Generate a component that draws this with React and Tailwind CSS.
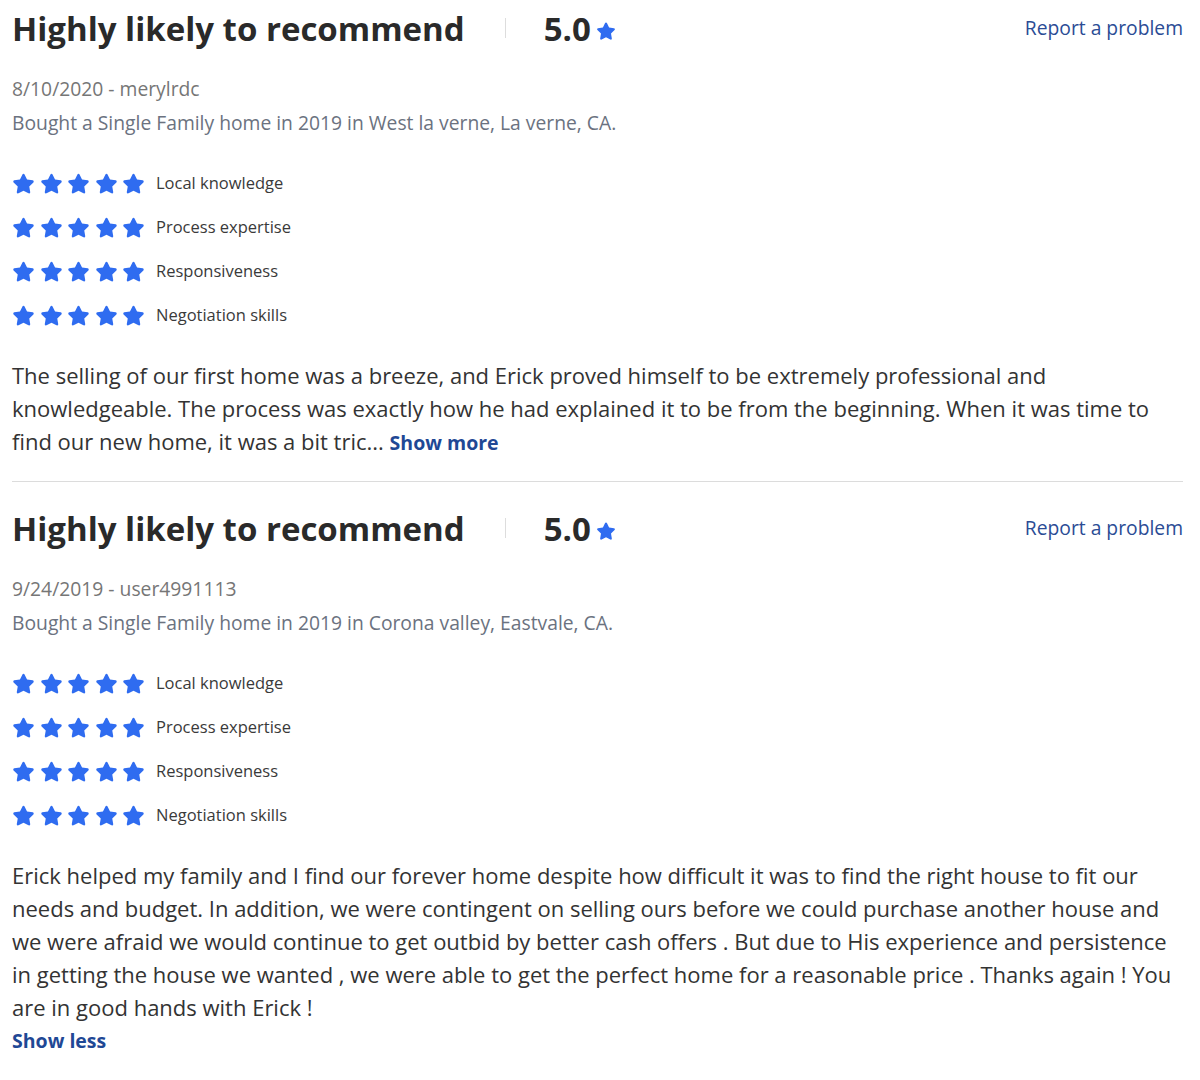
import React from "react";

const reviews = [
    {
        date: "8/10/2020",
        user: "merylrdc",
        bought: "Bought a Single Family home in 2019 in West la verne, La verne, CA.",
        text: "The selling of our first home was a breeze, and Erick proved himself to be extremely professional and knowledgeable. The process was exactly how he had explained it to be from the beginning. When it was time to find our new home, it was a bit tric...",
        expanded: false,
    },
    {
        date: "9/24/2019",
        user: "user4991113",
        bought: "Bought a Single Family home in 2019 in Corona valley, Eastvale, CA.",
        text: "Erick helped my family and I find our forever home despite how difficult it was to find the right house to fit our needs and budget. In addition, we were contingent on selling ours before we could purchase another house and we were afraid we would continue to get outbid by better cash offers . But due to His experience and persistence in getting the house we wanted , we were able to get the perfect home for a reasonable price . Thanks again ! You are in good hands with Erick !",
        expanded: true,
    },
];

const categories = ["Local knowledge", "Process expertise", "Responsiveness", "Negotiation skills"];

function Star({className}) {
    return (
        <svg viewBox="0 0 24 24" className={className} fill="currentColor">
            <path d="M12 1.8c.5 0 .9.3 1.1.7l2.6 5.4 5.9.8c.5.1.9.4 1 .9.2.5 0 1-.3 1.3l-4.3 4.1 1 5.9c.1.5-.1 1-.5 1.3-.4.3-.9.3-1.3.1L12 19.5l-5.2 2.8c-.4.2-.9.2-1.3-.1-.4-.3-.6-.8-.5-1.3l1-5.9-4.3-4.1c-.4-.3-.5-.8-.3-1.3.1-.5.5-.8 1-.9l5.9-.8 2.6-5.4c.2-.4.6-.7 1.1-.7z" />
        </svg>
    );
}

function Review({review, last}) {
    return (
        <div className={last ? "" : "border-b border-[#dcdcdc] pb-[22px] mb-[18px]"}>
            <div className="flex items-center h-[56px]">
                <h2 className="text-[33px] font-bold text-[#2a2a2a] leading-none">Highly likely to recommend</h2>
                <div className="w-px h-[20px] bg-[#dddddd] ml-[40px] mr-[38px]"></div>
                <span className="text-[33px] font-bold text-[#2a2a2a] leading-none">5.0</span>
                <Star className="w-[20px] h-[20px] text-[#2f6cf0] ml-[5px] mt-[6px]" />
                <a className="ml-auto text-[19.3px] text-[#2b4c95] mt-[1px]">Report a problem</a>
            </div>
            <div className="mt-[16px] text-[19.3px] leading-[34px]">
                <p className="text-[#767676]">{review.date} - {review.user}</p>
                <p className="text-[#6b7280]">{review.bought}</p>
            </div>
            <div className="mt-[21px]">
                {categories.map((c) => (
                    <div key={c} className="flex items-center h-[44px]">
                        <div className="flex gap-[4.5px]">
                            {[0, 1, 2, 3, 4].map((i) => (
                                <Star key={i} className="w-[23px] h-[23px] text-[#2f6cf0]" />
                            ))}
                        </div>
                        <span className="ml-[11px] text-[16.5px] text-[#3a3a3a]">{c}</span>
                    </div>
                ))}
            </div>
            <p className="mt-[22px] text-[22px] leading-[33px] text-[#333333]">
                {review.text}{" "}
                {!review.expanded && <a className="font-bold text-[#1f4895] text-[19.5px]">Show more</a>}
            </p>
            {review.expanded && <a className="block font-bold text-[#1f4895] text-[19.5px] leading-[33px]">Show less</a>}
        </div>
    );
}

export default function App() {
    return (
        <div className="bg-white w-[1200px] min-h-[1080px] pl-[12px] pr-[17px] font-['Open_Sans',sans-serif]">
            {reviews.map((r, i) => (
                <Review key={r.user} review={r} last={i === reviews.length - 1} />
            ))}
        </div>
    );
}
